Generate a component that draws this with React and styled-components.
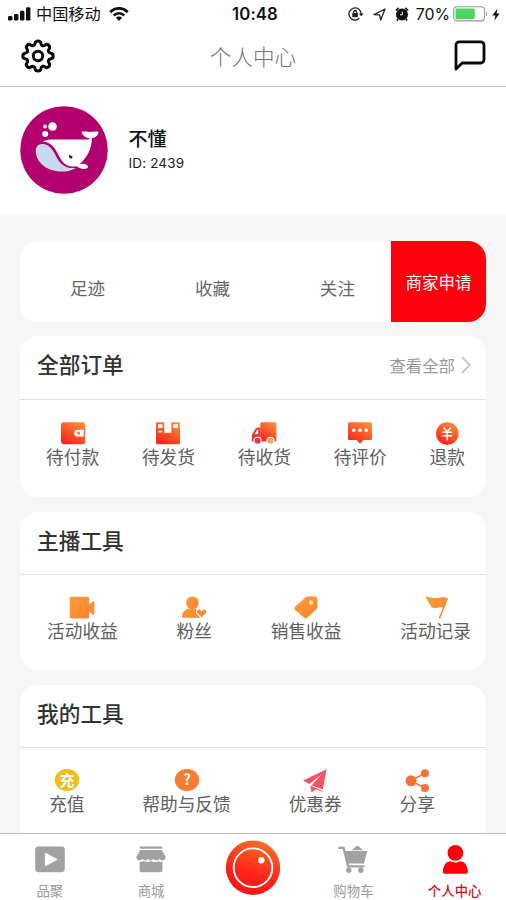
import React from 'react';
import styled, { createGlobalStyle } from 'styled-components';

const GlobalStyle = createGlobalStyle`
  * {
    box-sizing: border-box;
  }

  body {
    margin: 0;
    background: #f6f6f6;
    font-family: Inter, "Noto Sans CJK SC", sans-serif;
  }

  svg {
    display: block;
    flex: none;
  }
`;

const Screen = styled.div`
  width: 506px;
  height: 900px;
  display: flex;
  flex-direction: column;
  overflow: hidden;
  background: #f6f6f6;
`;

const StatusBar = styled.div`
  height: 28px;
  flex: none;
  display: grid;
  grid-template-columns: 1fr auto 1fr;
  align-items: center;
  padding: 0 6px 0 8px;
  background: #fff;
  color: #111;
  font-size: 16px;
`;

const StatusGroup = styled.div`
  display: flex;
  align-items: center;
  justify-content: ${props => props.$end ? 'flex-end' : 'flex-start'};
`;

const StatusIcons = styled.div`
  display: flex;
  align-items: center;
  gap: 9px;
`;

const Carrier = styled.span`
  margin: 0 8px 0 5px;
  font-size: 16.2px;
  line-height: 28px;
`;

const Clock = styled.span`
  padding-left: 2px;
  font-size: 16.8px;
  font-weight: 600;
  letter-spacing: 0.1px;
`;

const Percent = styled.span`
  margin: 0 3px 0 7px;
  font-size: 15.8px;
`;

const BatteryWrap = styled.div`
  margin-right: 3px;
`;

const NavBar = styled.header`
  height: 59px;
  flex: none;
  display: flex;
  align-items: center;
  justify-content: space-between;
  padding: 0 20px 3px 21px;
  border-bottom: 1px solid #c9c9c9;
  background: #fff;
`;

const NavTitle = styled.h1`
  margin: 2px 3px 0 0;
  color: #757575;
  font-size: 21.6px;
  font-weight: 300;
  line-height: 32px;
`;

const Profile = styled.section`
  height: 128px;
  flex: none;
  display: flex;
  align-items: flex-start;
  gap: 20.5px;
  padding: 19px 20px 0;
  background: #fff;
`;

const ProfileText = styled.div`
  padding-top: 21px;
`;

const Name = styled.div`
  color: #111;
  font-size: 19px;
  font-weight: 500;
  line-height: 26px;
`;

const UserId = styled.div`
  color: #222;
  font-size: 13.5px;
  line-height: 20px;
  letter-spacing: 0.15px;
`;

const Content = styled.main`
  flex: 1;
  min-height: 0;
  padding: 26px 20px 0;
  overflow: hidden;
`;

const Shortcuts = styled.div`
  height: 81px;
  display: flex;
  border-radius: 18px;
  background: #fff;
  overflow: hidden;
`;

const ShortcutList = styled.div`
  flex: 1;
  display: flex;
  align-items: center;
  justify-content: space-between;
  padding: 12px 36px 0 50px;
  color: #666;
  font-size: 17.6px;
`;

const MerchantButton = styled.button`
  width: 95px;
  padding: 0;
  border: 0;
  background: #fe000c;
  color: #fff;
  font-family: inherit;
  font-size: 16.5px;
`;

const Card = styled.section`
  height: ${props => props.$height}px;
  margin-top: ${props => props.$gap}px;
  border-radius: 18px;
  background: #fff;
`;

const CardHeader = styled.div`
  height: ${props => props.$height}px;
  display: flex;
  align-items: center;
  justify-content: space-between;
  padding: 0 15px 5px 17px;
  border-bottom: 1px solid #e2e2e2;
`;

const CardTitle = styled.h2`
  margin: 0;
  color: #333;
  font-size: 21.7px;
  font-weight: 500;
  line-height: 30px;
`;

const MoreLink = styled.div`
  display: flex;
  align-items: center;
  gap: 6px;
  color: #999;
  font-size: 16.4px;
`;

const ItemRow = styled.div`
  display: flex;
  justify-content: space-between;
  padding: ${props => props.$padding};
`;

const Item = styled.div`
  display: flex;
  flex-direction: column;
  align-items: center;
  color: #606060;
  font-size: 17.7px;
  line-height: 25px;
`;

const TabBar = styled.nav`
  height: 67px;
  flex: none;
  display: grid;
  grid-template-columns: repeat(5, 1fr);
  border-top: 1px solid #bdbdbd;
  background: #fff;
`;

const Tab = styled.div`
  display: flex;
  flex-direction: column;
  align-items: center;
  padding-top: ${props => props.$record ? '6px' : '10px'};
  padding-right: ${props => props.$record ? '0' : '1.5px'};
  color: ${props => props.$active ? '#d8101b' : '#999'};
  font-size: 13.4px;
  font-weight: ${props => props.$active ? 500 : 400};
  line-height: 20px;

  span {
    margin-top: 6px;
  }
`;

const GlyphText = styled.text`
  font-family: "Noto Sans CJK SC", sans-serif;
  font-weight: 700;
  fill: #fff;
  text-anchor: middle;
`;

const Gradients = () => (
  <svg width="0" height="0" style={{ position: 'absolute' }}>
    <defs>
      <linearGradient id="hot" x1="0.85" y1="0" x2="0.3" y2="0.9">
        <stop offset="0" stopColor="#fa9238" />
        <stop offset="1" stopColor="#fa2b20" />
      </linearGradient>
      <linearGradient id="warm" x1="0" y1="0" x2="1" y2="1">
        <stop offset="0" stopColor="#ff9c3c" />
        <stop offset="1" stopColor="#fa842b" />
      </linearGradient>
      <linearGradient id="record" x1="0.75" y1="0" x2="0.4" y2="1">
        <stop offset="0" stopColor="#fa722a" />
        <stop offset="0.65" stopColor="#fb2218" />
        <stop offset="1" stopColor="#f81616" />
      </linearGradient>
    </defs>
  </svg>
);

const Glyph = ({ w = 26, h = 23, children, ...rest }) => (
  <svg width={w} height={h} viewBox={`0 0 ${w} ${h}`} fill="none" {...rest}>
    {children}
  </svg>
);

const SignalIcon = () => (
  <Glyph w={23} h={14} fill="#111">
    <rect x="0" y="9" width="4.4" height="4.5" rx="1.2" />
    <rect x="6" y="7" width="4.4" height="6.5" rx="1.2" />
    <rect x="12" y="3.8" width="4.4" height="9.7" rx="1.2" />
    <rect x="18" y="0.3" width="4.4" height="13.2" rx="1.2" />
  </Glyph>
);

const WifiIcon = () => (
  <Glyph w={20} h={14} stroke="#111" strokeWidth="2.7">
    <path d="M1.3 5.2C6.2 0.2 13.8 0.2 18.7 5.2" />
    <path d="M4.8 8.5C7.7 5.5 12.3 5.5 15.2 8.5" />
    <path d="M10 14L6.9 10.7C8.5 9 11.5 9 13.1 10.7Z" fill="#111" stroke="none" />
  </Glyph>
);

const RotationLockIcon = () => (
  <Glyph w={16} h={14} stroke="#222" strokeWidth="1.3">
    <path d="M13.2 7A6.1 6.1 0 1 0 11.4 11.3" />
    <path d="M10.8 6.5H15.6L13.2 9.3Z" fill="#222" stroke="none" />
    <rect x="4.3" y="6" width="5.6" height="4.2" rx="0.6" fill="#222" stroke="none" />
    <path d="M5.6 6.2V5A1.5 1.5 0 0 1 8.6 5V6.2" />
  </Glyph>
);

const LocationIcon = () => (
  <Glyph w={13} h={13}>
    <path d="M1 6.6L12 1L7.7 12L6.6 6.9Z" stroke="#222" strokeWidth="1.3" strokeLinejoin="round" />
  </Glyph>
);

const AlarmIcon = () => (
  <Glyph w={14} h={14}>
    <circle cx="7" cy="7.5" r="6" fill="#111" />
    <path d="M0.9 3.5L3.7 0.9M13.1 3.5L10.3 0.9M3 12L1.9 13.6M11 12L12.1 13.6" stroke="#111" strokeWidth="1.7" />
    <path d="M7.3 4.6V7.8H5" stroke="#fff" strokeWidth="1" />
  </Glyph>
);

const BatteryIcon = () => (
  <Glyph w={36} h={16}>
    <rect x="0.7" y="0.7" width="30.8" height="14.2" rx="3.3" stroke="#999" strokeWidth="1.1" />
    <rect x="2.5" y="2.6" width="19.3" height="10.4" rx="1.2" fill="#4bd763" />
    <path d="M33 5.5C34.7 6.3 34.7 9.3 33 10.1Z" fill="#999" />
  </Glyph>
);

const BoltIcon = () => (
  <Glyph w={8} h={13}>
    <path d="M5.5 0.4L0.4 7.4H3.4L2.4 12.6L7.6 5.4H4.5Z" fill="#111" />
  </Glyph>
);

const GearIcon = () => (
  <Glyph w={34} h={34} stroke="#0a0a0a" strokeWidth="3" strokeLinejoin="round">
    <path d="M14.1 4.2C14.6 1.2 19.4 1.2 19.9 4.2C20.2 6.7 22.2 7.5 24.2 6C26.7 4.2 29.9 7.4 28.1 9.9C26.5 11.9 27.4 13.8 29.9 14.2C32.9 14.7 32.9 19.3 29.9 19.8C27.4 20.2 26.5 22.1 28.1 24.1C29.9 26.6 26.7 29.8 24.2 28C22.2 26.5 20.2 27.3 19.9 29.8C19.4 32.8 14.6 32.8 14.1 29.8C13.8 27.3 11.8 26.5 9.8 28C7.3 29.8 4.1 26.6 5.9 24.1C7.5 22.1 6.6 20.2 4.1 19.8C1.1 19.3 1.1 14.7 4.1 14.2C6.6 13.8 7.5 11.9 5.9 9.9C4.1 7.4 7.3 4.2 9.8 6C11.8 7.5 13.8 6.7 14.1 4.2Z" />
    <circle cx="17" cy="17" r="4.7" />
  </Glyph>
);

const MessageIcon = () => (
  <Glyph w={32} h={31} stroke="#0a0a0a" strokeWidth="2.8" strokeLinejoin="round">
    <path d="M2 29V5A3.2 3.2 0 0 1 5.2 1.8H26.8A3.2 3.2 0 0 1 30 5V19.8A3.2 3.2 0 0 1 26.8 23H8.2Z" />
  </Glyph>
);

const WhaleAvatar = () => (
  <Glyph w={88} h={88}>
    <circle cx="44" cy="44" r="43.8" fill="#b2006e" />
    <g fill="#fff">
      <circle cx="32.5" cy="20.5" r="4.3" />
      <circle cx="25" cy="20.5" r="1.9" />
      <circle cx="25.2" cy="28" r="3" />
      <path d="M22.5 35.6C26 33.8 30 33.6 35 33.6H66C68.8 33.6 70 33.2 69.2 32.1C65.5 31.8 62.3 29.2 61.6 26.2C61.6 25.4 63.5 25.4 70 26C76 25.3 78.7 25.2 78.6 26.2C78 29.4 75.4 31.6 72 32.1C71.5 38 70.8 42.5 68.4 47C65.8 52 62.5 55.7 59.4 58.2C62.5 57.2 66.4 57.6 67.8 60C68.6 62 66 63.4 63 63C60 62.5 57.8 61 56.5 60.2C50 61.5 45 59.2 42 55C38 49.5 36.5 43.5 32 39.6C29.5 37.5 27 36 22.5 35.6Z" />
    </g>
    <path d="M15.8 45C15.6 40.5 18.5 37.6 22.5 37.9C29 38.3 32.5 43 35.2 48.5C38 54.5 41 59 46.5 60.9C49.5 62 52.8 62.4 56 61.9C51.5 64.9 45 66 38.5 65.4C25.5 64.2 15.8 55.5 15.8 45Z" fill="#c6d9f0" />
    <path d="M49.2 48.4L51 49.7L52.7 50.4C52.5 52.5 50.2 53.2 49.1 51.5Z" fill="#182039" />
  </Glyph>
);

const ChevronIcon = () => (
  <Glyph w={10} h={18}>
    <path d="M1 1L8.7 9L1 17" stroke="#c9c9c9" strokeWidth="1.9" />
  </Glyph>
);

const WalletIcon = () => (
  <Glyph>
    <rect x="1" y="0.3" width="24.3" height="22" rx="3.3" fill="url(#hot)" />
    <path d="M23.8 7.7H17.6A3.4 3.4 0 0 0 17.6 14.5H23.8Z" fill="#fff" />
    <circle cx="18.6" cy="11.1" r="1.5" fill="#ff7228" />
  </Glyph>
);

const PackageIcon = () => (
  <Glyph>
    <path d="M1 1.3Q1 0.3 2 0.3H9.2V10.8H16.3V0.3H24Q25 0.3 25 1.3V21Q25 22.3 23.7 22.3H2.3Q1 22.3 1 21Z" fill="url(#hot)" />
    <path d="M3 2.2H7.4V6H3ZM18.4 2.2H23V6H18.4ZM3.4 8.8H7V10.6H3.4Z" fill="#fff" />
  </Glyph>
);

const TruckIcon = () => (
  <Glyph>
    <path d="M9.3 1.5A1.2 1.2 0 0 1 10.5 0.3H24.2A1.2 1.2 0 0 1 25.4 1.5V19.5H9.3Z" fill="url(#hot)" />
    <path d="M9.4 5.6H6.2Q5.2 5.6 4.7 6.5L1.2 12.2Q0.8 13 0.8 14V19.5H9.4Z" fill="#ea3c36" />
    <path d="M7.2 7.8H6.3L3.9 11.9H7.2Z" fill="#fff" />
    <g stroke="#fff" strokeWidth="1.1">
      <circle cx="6.6" cy="18.8" r="3.6" fill="#e63745" />
      <circle cx="19.5" cy="18.8" r="3.6" fill="#f9a667" />
    </g>
  </Glyph>
);

const CommentIcon = () => (
  <Glyph>
    <path d="M2.5 0.3H23.5A1.5 1.5 0 0 1 25 1.8V16.4A1.5 1.5 0 0 1 23.5 17.9H16.5L13 21.5L9.5 17.9H2.5A1.5 1.5 0 0 1 1 16.4V1.8A1.5 1.5 0 0 1 2.5 0.3Z" fill="url(#hot)" />
    <g fill="#fff">
      <circle cx="6.8" cy="8.2" r="1.8" />
      <circle cx="13" cy="8.2" r="1.8" />
      <circle cx="19.2" cy="8.2" r="1.8" />
    </g>
  </Glyph>
);

const RefundIcon = () => (
  <Glyph>
    <circle cx="13.3" cy="11.6" r="11.3" fill="url(#hot)" />
    <path d="M9.7 5.5L13.3 9.7L16.9 5.5M8.5 10.3H18.1M8.5 13.7H18.1M13.3 9.7V18.3" stroke="#fff" strokeWidth="1.5" />
  </Glyph>
);

const CameraIcon = () => (
  <Glyph>
    <rect x="0.7" y="0.8" width="19.6" height="21.7" rx="1.7" fill="url(#warm)" />
    <path d="M20 8.5L24 5.4Q25.4 4.8 25.4 6.2V18.2Q25.2 19.5 24 18.7L20 15.5Z" fill="#fa903c" />
  </Glyph>
);

const FansIcon = () => (
  <Glyph>
    <circle cx="11.4" cy="6.8" r="6.3" fill="url(#warm)" />
    <path d="M1 21.8C0.8 16.5 3.5 13.6 8 12.6H14.8C18 13.4 20 16.5 20.4 21.8Z" fill="url(#warm)" />
    <path d="M20.7 22.4L16.2 17.6C14.4 15.3 16 12.8 18.2 12.9C19.4 12.9 20.3 13.6 20.7 14.5C21.1 13.6 22 12.9 23.2 12.9C25.4 12.8 27 15.3 25.2 17.6Z" fill="#fb8a35" stroke="#fff" strokeWidth="1.3" />
  </Glyph>
);

const TagIcon = () => (
  <Glyph>
    <path d="M12.6 1.2Q13.3 0.4 14.4 0.4H22.4Q24.4 0.4 24.4 2.4V10.8Q24.4 12 23.5 12.9L14.4 21.6Q12.6 23 10.9 21.6L2 13.9Q0.5 12.3 2 10.8Z" fill="url(#warm)" />
    <circle cx="18" cy="6.5" r="2" fill="#fff" />
  </Glyph>
);

const FlagIcon = () => (
  <Glyph>
    <path d="M1.8 0.8C7.5 0.6 12 3.2 17 1.6C20 0.6 22.5 1.6 25.2 2.2L17.2 22.6L15.6 22.1L20 11.4C16 10.2 12.6 13.6 8.8 11.2C5.8 8.6 5.4 3.8 1.8 0.8Z" fill="url(#warm)" />
  </Glyph>
);

const RechargeIcon = () => (
  <Glyph>
    <ellipse cx="13" cy="11" rx="12.2" ry="10.9" fill="#efbd1c" />
    <GlyphText x="13" y="16.5" fontSize="15">充</GlyphText>
  </Glyph>
);

const HelpIcon = () => (
  <Glyph>
    <ellipse cx="13" cy="11" rx="12.2" ry="10.9" fill="#f77c31" />
    <GlyphText x="13" y="16.4" fontSize="15">?</GlyphText>
  </Glyph>
);

const CouponIcon = () => (
  <Glyph>
    <path d="M24.6 0.2L1 11.6L7.6 14.9L20 5L9.6 16.2L20.8 20.6Z" fill="#f35366" />
    <path d="M8.8 16.9L20.4 22.6L15 19.8L9.6 22.8Z" fill="#f35366" stroke="#f35366" strokeWidth="0.6" />
  </Glyph>
);

const ShareIcon = () => (
  <Glyph>
    <path d="M21 4.2L7 11.8L21 19" stroke="#f57235" strokeWidth="1.5" />
    <g fill="#f57235">
      <circle cx="7" cy="11.8" r="5.5" />
      <circle cx="21" cy="4.2" r="4" />
      <circle cx="21" cy="19" r="4" />
    </g>
  </Glyph>
);

const PlayIcon = () => (
  <Glyph w={30} h={31}>
    <rect x="0.2" y="2.6" width="29.6" height="25.6" rx="3.4" fill="#a1a1a1" />
    <path d="M10.4 9.2L22 15.5L10.4 21.8Z" fill="#fff" stroke="#fff" strokeLinejoin="round" />
  </Glyph>
);

const StoreIcon = () => (
  <Glyph w={30} h={31} fill="#a1a1a1">
    <rect x="3.6" y="2.5" width="22.8" height="2.3" rx="1" />
    <path d="M4.3 6H25.7L29.7 13.1C29.7 17 25 17 23.7 14.8C22 17 19 17 17.6 14.8C16 17 13.4 17 12 14.8C10.5 17 8 17 6.3 14.8C4.8 17 0.3 17 0.3 13.1Z" />
    <path d="M3.6 17.8C5.5 18 6.7 17.7 8 17.1C11 18.8 13.4 18 15 17.1C17.5 18.6 20.5 18.2 22.2 17.2C23.5 17.9 25 18 26.4 17.8V26.4Q26.4 28.2 24.6 28.2H5.4Q3.6 28.2 3.6 26.4Z" />
  </Glyph>
);

const RecordIcon = () => (
  <Glyph w={56} h={55}>
    <circle cx="28" cy="27.7" r="27.2" fill="url(#record)" />
    <circle cx="28" cy="27.7" r="19.3" stroke="#fff" strokeWidth="1.9" />
    <circle cx="36.3" cy="20.3" r="3.2" fill="#fff" />
  </Glyph>
);

const CartIcon = () => (
  <Glyph w={30} h={31} fill="#a1a1a1">
    <path d="M1.3 3.9H5.6L10.2 22.3H25.4" stroke="#a1a1a1" strokeWidth="2.3" strokeLinecap="round" fill="none" />
    <path d="M7 7H29.2L26 19.4H10Z" />
    <path d="M13.5 6.3L18 2.4Q19.4 1.2 20.8 2.4L25 6.3Z" />
    <circle cx="10.8" cy="26.2" r="2.7" />
    <circle cx="22.8" cy="26.2" r="2.7" />
  </Glyph>
);

const UserIcon = () => (
  <Glyph w={30} h={31} fill="#fe0009">
    <circle cx="15.4" cy="8.8" r="7.9" />
    <path d="M4.8 29.8Q2.9 29.8 2.9 27.6C3.2 21 6.5 17.2 10.6 17.2Q15.4 20 20.2 17.2C24.3 17.2 27.6 21 27.9 27.6Q27.9 29.8 26 29.8Z" />
  </Glyph>
);

const sections = [
  {
    title: '全部订单',
    more: true,
    height: 161,
    headerHeight: 64,
    gap: 14,
    padding: '22px 21px 0 26px',
    items: [
      { label: '待付款', icon: WalletIcon },
      { label: '待发货', icon: PackageIcon },
      { label: '待收货', icon: TruckIcon },
      { label: '待评价', icon: CommentIcon },
      { label: '退款', icon: RefundIcon },
    ],
  },
  {
    title: '主播工具',
    height: 158,
    headerHeight: 63,
    gap: 15,
    padding: '21px 15px 0 27px',
    items: [
      { label: '活动收益', icon: CameraIcon },
      { label: '粉丝', icon: FansIcon },
      { label: '销售收益', icon: TagIcon },
      { label: '活动记录', icon: FlagIcon },
    ],
  },
  {
    title: '我的工具',
    height: 160,
    headerHeight: 63,
    gap: 15,
    padding: '21px 51px 0 29px',
    items: [
      { label: '充值', icon: RechargeIcon },
      { label: '帮助与反馈', icon: HelpIcon },
      { label: '优惠券', icon: CouponIcon },
      { label: '分享', icon: ShareIcon },
    ],
  },
];

const tabs = [
  { label: '品聚', icon: PlayIcon },
  { label: '商城', icon: StoreIcon },
  { icon: RecordIcon, record: true },
  { label: '购物车', icon: CartIcon },
  { label: '个人中心', icon: UserIcon, active: true },
];

const ToolCard = ({ section }) => (
  <Card $height={section.height} $gap={section.gap}>
    <CardHeader $height={section.headerHeight}>
      <CardTitle>{section.title}</CardTitle>
      {section.more && (
        <MoreLink>
          查看全部
          <ChevronIcon />
        </MoreLink>
      )}
    </CardHeader>
    <ItemRow $padding={section.padding}>
      {section.items.map(({ label, icon: Icon }) => (
        <Item key={label}>
          <Icon />
          {label}
        </Item>
      ))}
    </ItemRow>
  </Card>
);

const App = () => (
  <Screen>
    <GlobalStyle />
    <Gradients />
    <StatusBar>
      <StatusGroup>
        <SignalIcon />
        <Carrier>中国移动</Carrier>
        <WifiIcon />
      </StatusGroup>
      <Clock>10:48</Clock>
      <StatusGroup $end>
        <StatusIcons>
          <RotationLockIcon />
          <LocationIcon />
          <AlarmIcon />
        </StatusIcons>
        <Percent>70%</Percent>
        <BatteryWrap>
          <BatteryIcon />
        </BatteryWrap>
        <BoltIcon />
      </StatusGroup>
    </StatusBar>
    <NavBar>
      <GearIcon />
      <NavTitle>个人中心</NavTitle>
      <MessageIcon />
    </NavBar>
    <Profile>
      <WhaleAvatar />
      <ProfileText>
        <Name>不懂</Name>
        <UserId>ID: 2439</UserId>
      </ProfileText>
    </Profile>
    <Content>
      <Shortcuts>
        <ShortcutList>
          <span>足迹</span>
          <span>收藏</span>
          <span>关注</span>
        </ShortcutList>
        <MerchantButton>商家申请</MerchantButton>
      </Shortcuts>
      {sections.map(section => (
        <ToolCard key={section.title} section={section} />
      ))}
    </Content>
    <TabBar>
      {tabs.map(({ label, icon: Icon, active, record }) => (
        <Tab key={label || 'record'} $active={active} $record={record}>
          <Icon />
          {label && <span>{label}</span>}
        </Tab>
      ))}
    </TabBar>
  </Screen>
);

export default App;
